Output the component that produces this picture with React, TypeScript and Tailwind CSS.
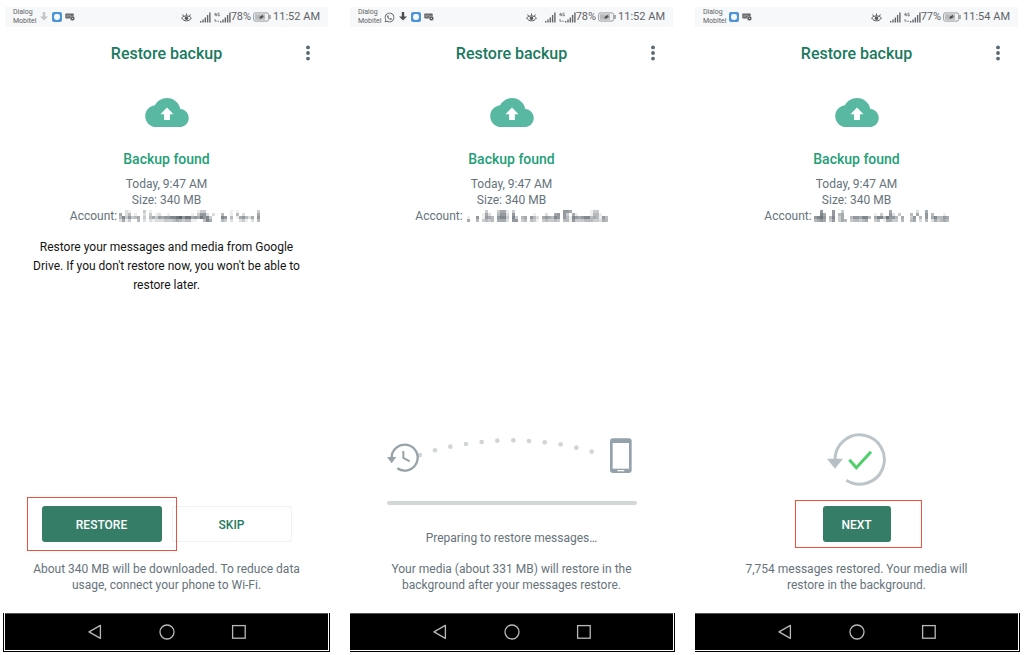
import type { ReactNode } from "react";
import { FaWhatsapp } from "react-icons/fa";

const MOSAIC_A = [
  "002100003010000000000000001330000000010100000030",
  "502401002030120010000000103662020040010402000050",
  "473634503045365667789688565867300076040156425060",
  "251300402021222333454344110047500043020023102040",
];
const MOSAIC_B = [
  "0000003000355103000000000000000066500000013300000",
  "0000015200466206000000100020056063051000014410001",
  "1006016540677307304506420565476064176567745416467",
  "5004034340555206603404310343343044163334443325446",
];
const MOSAIC_C = [
  "006000600300000000000000050000000020050000000",
  "007500604500000000001030062030004050060400010",
  "678604703500466577405774866405003604060574465",
  "456503603540344345003401553304004502040253454",
];

function Mosaic({ rows }: { rows: string[] }) {
  const width = rows[0].length * 3;
  return (
    <svg width={width} height={12} viewBox={`0 0 ${width} 12`} role="img" aria-label="hidden" className="shrink-0">
      {rows.map((row, y) =>
        row.split("").map((level, x) =>
          level === "0" ? null : (
            <rect key={`${x}-${y}`} x={x * 3} y={y * 3} width={3} height={3} fill="#4b555d" opacity={Number(level) / 10} />
          ),
        ),
      )}
    </svg>
  );
}

function DownloadIcon({ className }: { className: string }) {
  return (
    <svg viewBox="0 0 10 12" className={`h-3 w-2.5 ${className}`} aria-hidden="true">
      <path d="M3.8 1h2.4v4.6H9L5 9.6 1 5.6h2.8z" fill="currentColor" />
    </svg>
  );
}

function AppIcon() {
  return (
    <svg viewBox="0 0 10 10" className="size-2.5" aria-hidden="true">
      <rect width="10" height="10" rx="2" fill="#4d93d6" />
      <rect x="2" y="2" width="6" height="6" rx="2.4" fill="#f4f9fd" />
    </svg>
  );
}

function CardIcon() {
  return (
    <svg viewBox="0 0 10 10" className="size-2.5" aria-hidden="true">
      <rect x="0.3" y="1.5" width="8.4" height="5" rx="0.8" fill="#5c5f63" />
      <path d="M1.2 3.2h5M1.2 4.8h3" stroke="#c9cbce" strokeWidth="0.6" />
      <circle cx="7.4" cy="6.4" r="2.4" fill="#55585c" stroke="#f6f7f9" strokeWidth="0.5" />
      <circle cx="7.4" cy="6.4" r="0.7" fill="#d7d9db" />
    </svg>
  );
}

function EyeIcon() {
  return (
    <svg viewBox="0 0 11 9" className="h-[9px] w-[11px]" fill="none" stroke="#4f5357" aria-hidden="true">
      <path d="M.6 5C3 2.2 8 2.2 10.4 5 8 8.8 3 8.8.6 5z" strokeWidth="1" />
      <circle cx="5.5" cy="5.2" r="1.7" fill="#4f5357" stroke="none" />
      <path d="M5.5 2.6V.4M2.6 3.2 1.6 1.4M8.4 3.2l1-1.8" strokeWidth="0.9" />
    </svg>
  );
}

function SignalIcon() {
  return (
    <svg viewBox="0 0 11 11" className="size-[11px]" fill="#63676b" aria-hidden="true">
      <path d="M0 9h1.4v1.6H0zM2.3 7.4h1.4v3.2H2.3zM4.6 5.4H6v5.2H4.6zM6.9 3h1.4v7.6H6.9zM9.2.6h1.4v10H9.2z" />
    </svg>
  );
}

function BatteryIcon() {
  return (
    <svg viewBox="0 0 18 10" className="h-2.5 w-[18px]" aria-hidden="true">
      <rect x="0.6" y="0.9" width="15" height="8.2" rx="1.6" fill="#f1f2f3" stroke="#9a9da0" strokeWidth="1" />
      <rect x="2" y="2.2" width="10" height="5.6" fill="#b9bbbd" />
      <rect x="16.4" y="3" width="1.2" height="4" fill="#7a7d80" />
      <path d="M10.6 2.6 5.6 5.4h2.2L6.4 7.4l5-2.9H9.2z" fill="#3f4346" />
    </svg>
  );
}

function StatusBar({ battery, time, children }: { battery: string; time: string; children: ReactNode }) {
  return (
    <div className="flex h-5 items-center justify-between bg-[#f7f8f9] px-2 text-[#5f6367]">
      <div className="flex items-center gap-[3px]">
        <p className="text-[7px] leading-[9px]">
          Dialog
          <br />
          Mobitel
        </p>
        {children}
      </div>
      <div className="flex items-center text-[11px] leading-4">
        <EyeIcon />
        <span className="ml-2 flex items-center gap-[3px]">
          <SignalIcon />
          <span className="flex items-center">
            <svg viewBox="0 0 6 11" className="h-[11px] w-1.5" fill="none" stroke="#63676b" strokeWidth="0.8" aria-hidden="true">
              <path d="M1.6.8.6 3h2M2.2 1.4v2.8M5.4 1.2H4v2.6h1.4V2.6M1 7v2.2h1.6M3.4 9.2h1.6" />
            </svg>
            <SignalIcon />
          </span>
        </span>
        <span className="mr-0.5">{battery}</span>
        <BatteryIcon />
        <span className="ml-0.5">{time}</span>
      </div>
    </div>
  );
}

function NavBar({ first }: { first?: boolean }) {
  return (
    <div className={first ? "-mr-0.5 -ml-0.5 border-x border-b border-black px-px pb-px" : "-mr-0.5 border-r border-b border-black pr-px pb-px"}>
      <nav aria-label="System" className="flex h-[37px] items-center justify-center gap-14 border-t border-[#555] bg-black">
        <button type="button" aria-label="Back">
          <svg viewBox="0 0 16 16" className="size-4" fill="none" stroke="#b9b9b9" strokeWidth="1.3" aria-hidden="true">
            <path d="M13.4 1.4v13L2 7.9z" strokeLinejoin="round" />
          </svg>
        </button>
        <button type="button" aria-label="Home">
          <svg viewBox="0 0 16 16" className="size-4" fill="none" stroke="#b9b9b9" strokeWidth="1.3" aria-hidden="true">
            <circle cx="8" cy="8" r="7" />
          </svg>
        </button>
        <button type="button" aria-label="Recent apps">
          <svg viewBox="0 0 16 16" className="size-4" fill="none" stroke="#b9b9b9" strokeWidth="1.3" aria-hidden="true">
            <rect x="1.6" y="1.6" width="12.6" height="12.6" />
          </svg>
        </button>
      </nav>
    </div>
  );
}

interface PhoneProps {
  battery: string;
  time: string;
  icons: ReactNode;
  account: string[];
  accountGap: string;
  description?: string;
  caption: string;
  first?: boolean;
  children: ReactNode;
}

function Phone({ battery, time, icons, account, accountGap, description, caption, first, children }: PhoneProps) {
  return (
    <section className="flex min-w-0 flex-col">
      <StatusBar battery={battery} time={time}>
        {icons}
      </StatusBar>
      <header className="grid h-[54px] grid-cols-[1fr_auto_1fr] items-center px-3">
        <h1 className="col-start-2 text-base leading-5 font-medium text-[#1a7a5e]">Restore backup</h1>
        <button type="button" aria-label="More options" className="flex h-6 w-4 items-center justify-center justify-self-end">
          <svg viewBox="0 0 6 18" className="h-[18px] w-1.5" fill="#5a6872" aria-hidden="true">
            <circle cx="3" cy="2.4" r="1.9" />
            <circle cx="3" cy="8" r="1.9" />
            <circle cx="3" cy="13.6" r="1.9" />
          </svg>
        </button>
      </header>
      <main className="flex flex-1 flex-col items-center px-5 pt-[17px] pb-5 text-center text-xs leading-4 text-[#66737b]">
        <svg viewBox="0 4 24 16" className="h-[29px] w-11" aria-hidden="true">
          <path
            fill="#59b8a2"
            d="M19.35 10.04C18.67 6.59 15.64 4 12 4 9.11 4 6.6 5.64 5.35 8.04 2.34 8.36 0 10.91 0 14c0 3.31 2.69 6 6 6h13c2.76 0 5-2.24 5-5 0-2.64-2.05-4.78-4.65-4.96z"
          />
          <path fill="#fff" d="M12 9.2l3.6 3.7h-2v3.2h-3.2v-3.2h-2z" />
        </svg>
        <h2 className="mt-[22px] mb-[7px] text-sm leading-5 font-medium text-[#23a077]">Backup found</h2>
        <p>Today, 9:47 AM</p>
        <p>Size: 340 MB</p>
        <p className={`flex items-center ${accountGap}`}>
          Account: <Mosaic rows={account} />
        </p>
        {description && <p className="mt-3.5 leading-[19px] text-[#141414]">{description}</p>}
        <div className="flex w-full max-w-[250px] flex-1 flex-col items-center justify-end">{children}</div>
        <p className={first ? "mt-[19px] max-w-[270px]" : "mt-[19px] max-w-[250px]"}>{caption}</p>
      </main>
      <NavBar first={first} />
    </section>
  );
}

function TransferGraphic() {
  const dots = [
    [150, 105], [195, 91], [241, 80], [288, 72], [335, 66], [382, 62],
    [430, 61], [477, 63], [524, 67], [572, 73], [619, 83], [665, 95],
  ];
  return (
    <svg viewBox="51 48 750 120" className="h-10 w-full" aria-hidden="true">
      {dots.map(([x, y]) => (
        <circle key={x} cx={x} cy={y} r="7" fill="#d0d5d7" />
      ))}
      <path d="M65 113a39 39 0 1 1 17 32" fill="none" stroke="#97a3a9" strokeWidth="7" />
      <path d="M51 111h28l-14 19z" fill="#97a3a9" />
      <path d="M100 93v21l19 10" fill="none" stroke="#97a3a9" strokeWidth="6" />
      <rect x="720" y="55" width="65" height="104" rx="9" fill="#93a2ab" />
      <rect x="728" y="69" width="49" height="77" fill="#fff" />
      <rect x="742" y="150" width="21" height="4" rx="2" fill="#fff" />
    </svg>
  );
}

function DoneGraphic() {
  return (
    <svg viewBox="139 36 186 168" className="h-14 w-[62px]" fill="none" aria-hidden="true">
      <path d="M166 120a74 74 0 1 1 34 61" stroke="#bcc5ca" strokeWidth="9" />
      <path d="M142 116h48l-24 30z" fill="#b5bfc5" />
      <path d="M209 119l21 24 44-48" stroke="#4fd06c" strokeWidth="9" />
    </svg>
  );
}

export default function App() {
  return (
    <div
      className="grid min-h-screen grid-cols-3 gap-[22px] bg-white pt-[7px] pr-1.5 pb-[3px] pl-[5px]"
      style={{ fontFamily: "Roboto, sans-serif" }}
    >
      <Phone
        first
        battery="78%"
        time="11:52 AM"
        icons={
          <>
            <DownloadIcon className="text-[#c2c4c6]" />
            <AppIcon />
            <CardIcon />
          </>
        }
        account={MOSAIC_A}
        accountGap="gap-0.5"
        description="Restore your messages and media from Google Drive. If you don't restore now, you won't be able to restore later."
        caption="About 340 MB will be downloaded. To reduce data usage, connect your phone to Wi-Fi."
      >
        <div className="grid w-full grid-cols-2 gap-2.5 text-xs font-medium">
          <div className="relative z-10">
            <button type="button" className="h-9 w-full rounded-[3px] bg-[#357d66] pt-px text-white">
              RESTORE
            </button>
            <span className="pointer-events-none absolute -inset-x-[15px] -inset-y-[9px] border border-[#f0513f]" />
          </div>
          <button type="button" className="h-9 w-full rounded-[3px] border border-[#f0f1f1] pt-px text-[#1c7c60]">
            SKIP
          </button>
        </div>
      </Phone>

      <Phone
        battery="78%"
        time="11:52 AM"
        icons={
          <>
            <FaWhatsapp className="size-[11px]" aria-hidden="true" />
            <DownloadIcon className="text-[#4b4e52]" />
            <AppIcon />
            <CardIcon />
          </>
        }
        account={MOSAIC_B.map((row) => row.slice(0, 47))}
        accountGap="gap-1"
        caption="Your media (about 331 MB) will restore in the background after your messages restore."
      >
        <TransferGraphic />
        <div role="progressbar" aria-label="Restore progress" className="mt-[25px] mb-[25px] h-1 w-full rounded-full bg-[#d3d7d7]" />
        <p className="-mb-1">Preparing to restore messages…</p>
      </Phone>

      <Phone
        battery="77%"
        time="11:54 AM"
        icons={
          <>
            <AppIcon />
            <CardIcon />
          </>
        }
        account={MOSAIC_C}
        accountGap="gap-0.5"
        caption="7,754 messages restored. Your media will restore in the background."
      >
        <DoneGraphic />
        <div className="relative mt-[18px] text-xs font-medium">
          <button type="button" className="h-9 w-17 rounded-[3px] bg-[#357d66] pt-px text-white">
            NEXT
          </button>
          <span className="pointer-events-none absolute -inset-y-1.5 -right-[31px] -left-7 border border-[#f0513f]" />
        </div>
      </Phone>
    </div>
  );
}
